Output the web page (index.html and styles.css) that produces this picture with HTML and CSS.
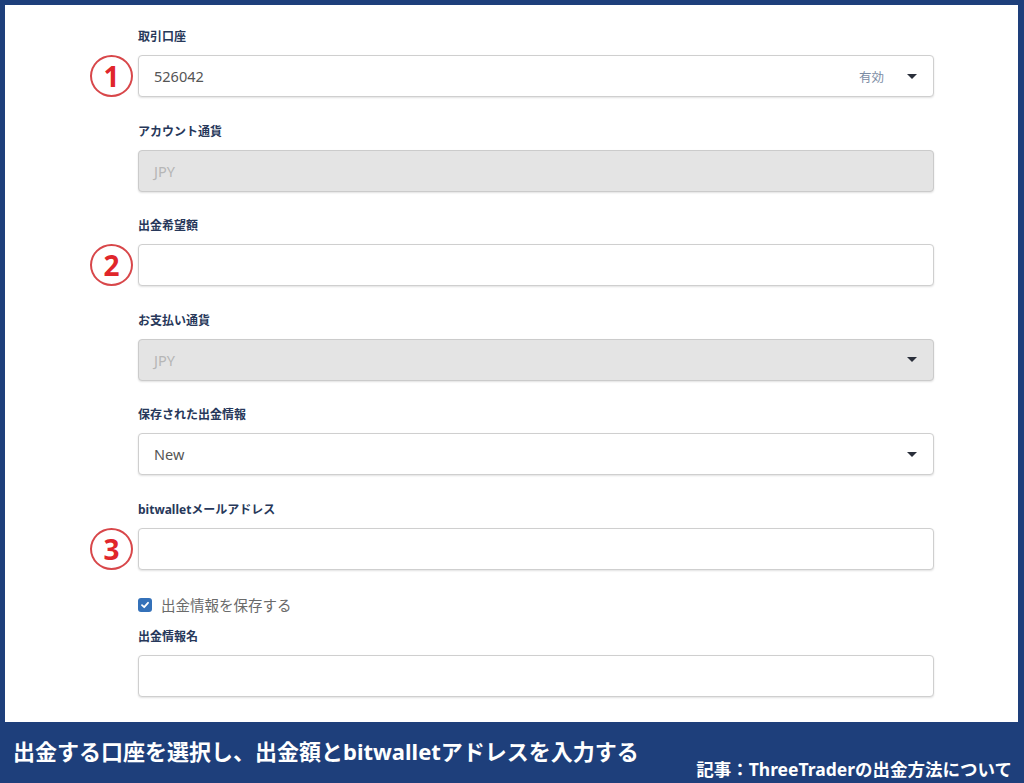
FILE: index.html
```html
<!DOCTYPE html>
<html>
<head>
  <meta charset="UTF-8">
  <title>出金</title>
  <link rel="stylesheet" href="styles.css">
</head>
<body>
  <div class="frame">
    <div class="sheet">
      <form class="form">
        <div class="field">
          <label class="label">取引口座</label>
          <div class="control">
            <span class="mark">1</span>
            <div class="box select">
              <span class="value">526042</span>
              <span class="status">有効</span>
              <span class="caret"></span>
            </div>
          </div>
        </div>

        <div class="field">
          <label class="label">アカウント通貨</label>
          <div class="control">
            <div class="box disabled"><span class="value">JPY</span></div>
          </div>
        </div>

        <div class="field">
          <label class="label">出金希望額</label>
          <div class="control">
            <span class="mark">2</span>
            <div class="box"></div>
          </div>
        </div>

        <div class="field">
          <label class="label">お支払い通貨</label>
          <div class="control">
            <div class="box disabled select">
              <span class="value">JPY</span>
              <span class="caret"></span>
            </div>
          </div>
        </div>

        <div class="field">
          <label class="label">保存された出金情報</label>
          <div class="control">
            <div class="box select">
              <span class="value">New</span>
              <span class="caret"></span>
            </div>
          </div>
        </div>

        <div class="field">
          <label class="label">bitwalletメールアドレス</label>
          <div class="control">
            <span class="mark">3</span>
            <div class="box"></div>
          </div>
        </div>

        <div class="check-row">
          <span class="checkbox">
            <svg width="10" height="10" viewBox="0 0 10 10"><path d="M2 5.2 L4.2 7.2 L8 2.8" fill="none" stroke="#fff" stroke-width="1.8" stroke-linecap="round" stroke-linejoin="round"/></svg>
          </span>
          <span class="check-text">出金情報を保存する</span>
        </div>

        <div class="field last">
          <label class="label">出金情報名</label>
          <div class="control">
            <div class="box"></div>
          </div>
        </div>
      </form>
    </div>
    <div class="caption">
      <p class="caption-main">出金する口座を選択し、出金額とbitwalletアドレスを入力する</p>
      <p class="caption-sub">記事：ThreeTraderの出金方法について</p>
    </div>
  </div>
</body>
</html>
```

FILE: styles.css
```css
* {
  box-sizing: border-box;
  margin: 0;
  padding: 0;
}

body {
  width: 1024px;
  height: 783px;
  overflow: hidden;
  font-family: "Noto Sans", "Noto Sans CJK JP", sans-serif;
  background: #1e3f7b;
}

.frame {
  height: 783px;
  display: flex;
  flex-direction: column;
  padding: 5px 6px 0 5px;
}

.sheet {
  height: 717px;
  background: #fff;
  padding: 25px 0 0 133px;
}

.form {
  width: 796px;
}

.field {
  margin-bottom: 27.5px;
}

.field.last {
  margin-bottom: 0;
}

.label {
  display: block;
  height: 14px;
  line-height: 14px;
  margin-bottom: 11px;
  font-size: 12px;
  font-weight: 700;
  color: #27385a;
}

.control {
  position: relative;
}

.mark {
  position: absolute;
  left: -48px;
  top: 0;
  width: 43px;
  height: 42px;
  border: 2px solid #d8474a;
  border-radius: 50%;
  display: flex;
  align-items: center;
  justify-content: center;
  font-family: "Noto Sans", sans-serif;
  font-size: 28px;
  font-weight: 700;
  color: #e0262b;
  line-height: 1;
  background: #fff;
}

.box {
  height: 42px;
  border: 1px solid #cfcfcf;
  border-radius: 4px;
  background: #fff;
  box-shadow: 0 1px 2px rgba(0,0,0,0.12);
  display: flex;
  align-items: center;
  padding: 0 16px 0 15px;
}

.box.disabled {
  background: #e4e4e4;
  border-color: #cbcbcb;
}

.value {
  flex: 1;
  font-size: 14.5px;
  color: #555;
}

.disabled .value {
  color: #b6b6b6;
}

.status {
  font-size: 12.5px;
  color: #7b8ca4;
  margin-right: 23px;
}

.caret {
  width: 0;
  height: 0;
  border-left: 5px solid transparent;
  border-right: 5px solid transparent;
  border-top: 5px solid #2a2f3a;
}

.check-row {
  display: flex;
  align-items: center;
  gap: 9px;
  height: 18px;
  margin: -1.5px 0 16px;
}

.checkbox {
  width: 14px;
  height: 14px;
  border-radius: 3px;
  background: #3471b9;
  display: flex;
  align-items: center;
  justify-content: center;
}

.check-text {
  font-size: 14.5px;
  color: #6a6a6a;
}

.caption {
  flex: 1;
  display: flex;
  justify-content: space-between;
  align-items: flex-start;
  padding: 0 6px 0 8px;
  color: #fff;
  font-family: "Noto Sans", "Noto Sans CJK JP", sans-serif;
  font-weight: 700;
}

.caption-main {
  font-size: 22px;
  line-height: 30px;
  margin-top: 14px;
}

.caption-sub {
  font-size: 17.5px;
  line-height: 24px;
  margin-top: 35px;
}
```
